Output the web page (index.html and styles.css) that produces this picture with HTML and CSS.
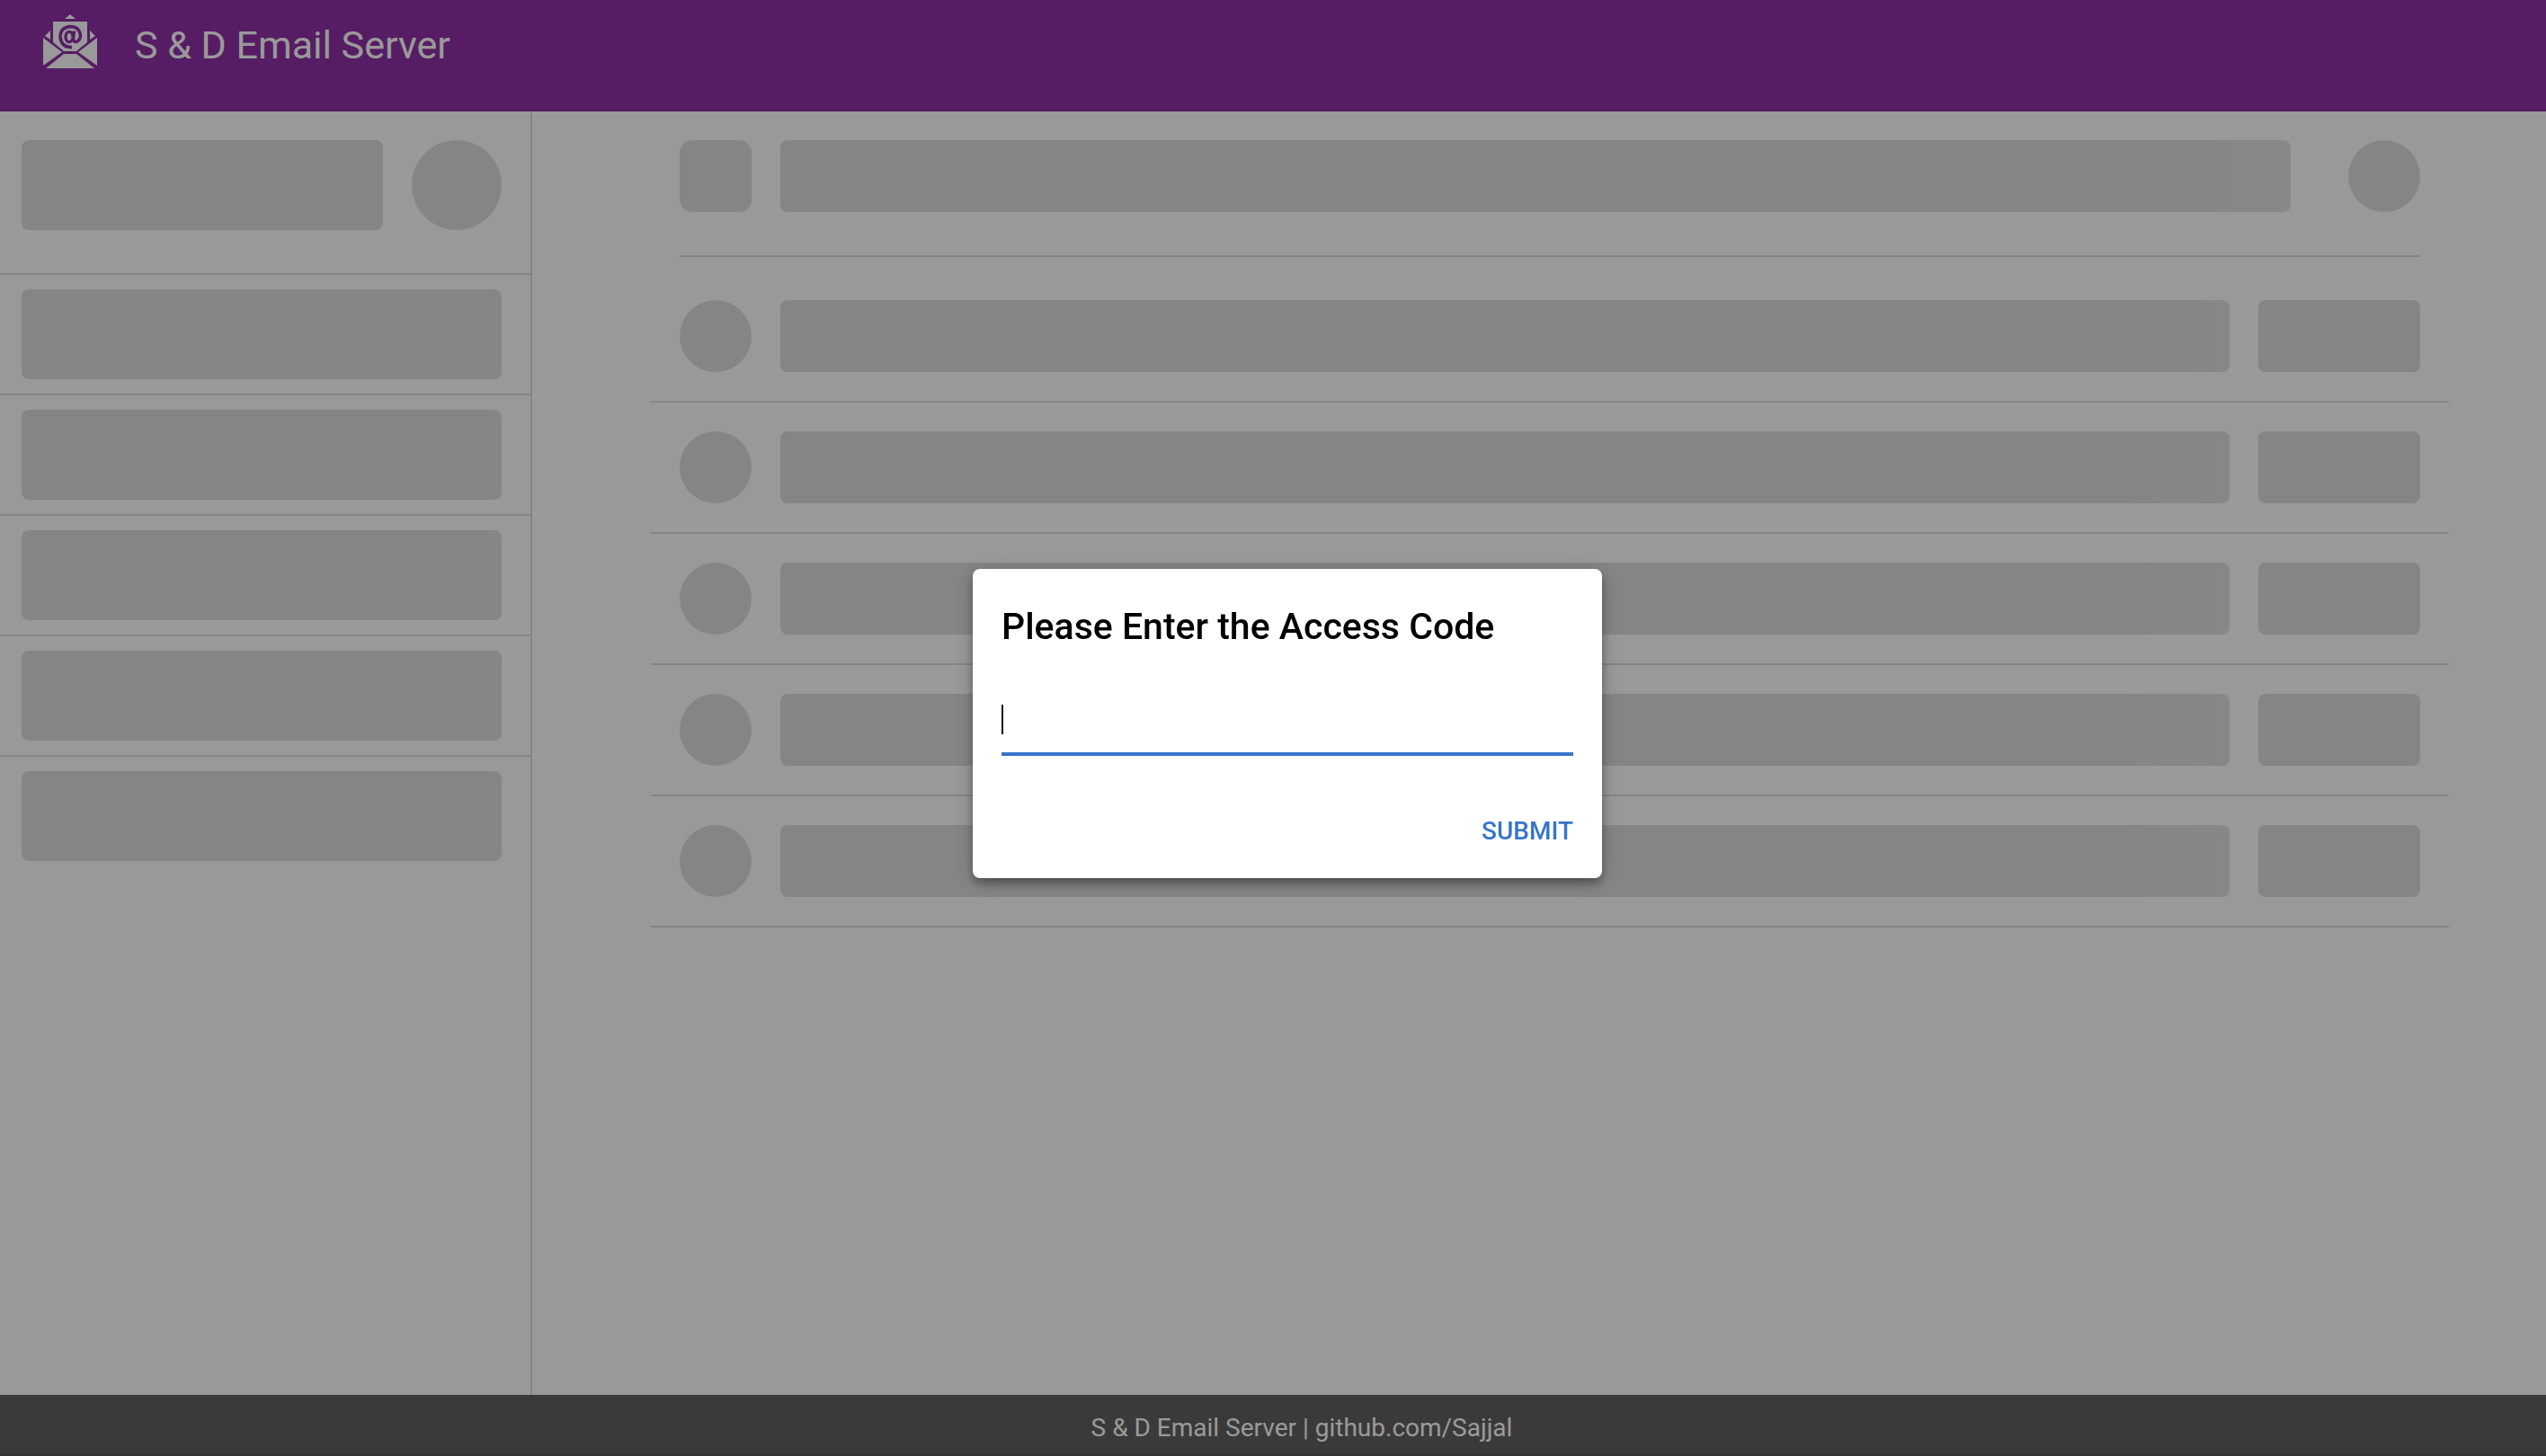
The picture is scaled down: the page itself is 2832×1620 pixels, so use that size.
FILE: index.html
```html
<!DOCTYPE html>
<html lang="en">
<head>
<meta charset="utf-8">
<meta name="viewport" content="width=device-width, initial-scale=1">
<title>S &amp; D Email Server</title>
<link rel="stylesheet" href="styles.css">
</head>
<body>
<div class="app">
  <header class="topbar">
    <svg class="logo" viewBox="0 0 60 60" aria-hidden="true">
      <g fill="currentColor">
        <path d="M30 0L36 5H24Z"/>
        <path d="M2 24L8 18V28Z"/>
        <path d="M58 24L52 18V28Z"/>
        <path d="M11 8H49V31L37 41H23L11 31Z"/>
        <path d="M0 26L21 42L0 57Z"/>
        <path d="M60 26L39 42L60 57Z"/>
        <path d="M3 60L23 44H37L57 60Z"/>
      </g>
      <g class="logo-mark" fill="none" stroke-width="3.4">
        <ellipse cx="29" cy="25" rx="4" ry="5.6"/>
        <path d="M34.500 18.500L33.500 27Q33.500 31 37 30.500Q41.500 29 41.500 23Q40 13.500 30 13.500Q19 14.500 19 25Q20 37 32 36.500"/>
      </g>
    </svg>
    <h1 class="brand">S &amp; D Email Server</h1>
  </header>
  <div class="body">
    <aside class="sidebar">
      <div class="side-head"><div class="bone bar"></div><div class="bone circle"></div></div>
      <div class="side-item"><div class="bone bar"></div></div>
      <div class="side-item"><div class="bone bar"></div></div>
      <div class="side-item"><div class="bone bar"></div></div>
      <div class="side-item"><div class="bone bar"></div></div>
      <div class="side-item"><div class="bone bar"></div></div>
    </aside>
    <main class="content">
      <div class="toolbar"><div class="bone square"></div><div class="bone bar"></div><div class="bone circle action"></div></div>
      <div class="mail"><div class="bone circle"></div><div class="bone bar"></div><div class="bone date"></div></div>
      <div class="mail"><div class="bone circle"></div><div class="bone bar"></div><div class="bone date"></div></div>
      <div class="mail"><div class="bone circle"></div><div class="bone bar"></div><div class="bone date"></div></div>
      <div class="mail"><div class="bone circle"></div><div class="bone bar"></div><div class="bone date"></div></div>
      <div class="mail"><div class="bone circle"></div><div class="bone bar"></div><div class="bone date"></div></div>
    </main>
  </div>
  <footer class="footer">S &amp; D Email Server | github.com/Sajjal</footer>
</div>
<div class="overlay">
  <form class="dialog" role="dialog" aria-labelledby="dialog-title">
    <label class="dialog-title" id="dialog-title" for="code">Please Enter the Access Code</label>
    <input class="code" id="code" type="password" autocomplete="off">
    <button class="submit" type="button">SUBMIT</button>
  </form>
</div>
</body>
</html>
```
FILE: styles.css
```css
*, *::before, *::after { box-sizing: border-box; }
body {
  margin: 0;
  font-family: Roboto, "Liberation Sans", sans-serif;
  background: #fff;
}
.app {
  display: flex;
  flex-direction: column;
  min-height: 100vh;
}
.topbar {
  display: flex;
  align-items: flex-start;
  gap: 42px;
  height: 124px;
  padding: 16px 48px;
  background: #9030a7;
  color: #fff;
}
.logo { width: 60px; height: 60px; }
.logo-mark { stroke: #9030a7; }
.brand {
  margin: 0;
  font-size: 43px;
  line-height: 68px;
  font-weight: 400;
}
.body { display: flex; flex: 1; }
.sidebar {
  width: 592px;
  flex: none;
  border-right: 2px solid #dedede;
}
.bone {
  height: 80px;
  border-radius: 8px;
  background: #dedede;
}
.bar { flex: 1; }
.circle { width: 80px; border-radius: 50%; }
.square { width: 80px; border-radius: 14px; }
.date { width: 180px; }
.sidebar .bone { height: 100px; }
.sidebar .circle { width: 100px; }
.side-head {
  display: flex;
  gap: 32px;
  padding: 32px 32px 48px 24px;
}
.side-item {
  display: flex;
  padding: 16px 32px 16px 24px;
  border-top: 2px solid #dedede;
}
.content {
  flex: 1;
  padding: 0 108px 0 132px;
}
.toolbar {
  display: flex;
  gap: 32px;
  margin: 0 32px 16px;
  padding: 32px 0 48px;
  border-bottom: 2px solid #dedede;
}
.toolbar .bar {
  background: linear-gradient(90deg, #dedede 92%, #e3e3e3);
}
.action { margin-left: 32px; }
.mail {
  display: flex;
  gap: 32px;
  padding: 32px;
  border-bottom: 2px solid #dedede;
}
.mail .bar {
  background: linear-gradient(90deg, #dedede 93%, #e1e1e1);
}
.footer {
  height: 68px;
  padding-left: 64px;
  border-bottom: 1px solid #614f61;
  background: #616161;
  color: #fff;
  font-size: 28px;
  line-height: 74px;
  text-align: center;
}
.overlay {
  position: fixed;
  inset: 0;
  display: flex;
  align-items: center;
  justify-content: center;
  padding-left: 32px;
  background: rgba(0, 0, 0, 0.4);
}
.dialog {
  display: flex;
  flex-direction: column;
  width: 700px;
  margin-bottom: 10px;
  padding: 32px;
  border-radius: 8px;
  background: #fff;
  box-shadow: 0 6px 10px rgba(0, 0, 0, 0.3), 0 4px 24px rgba(0, 0, 0, 0.2);
}
.dialog-title {
  font-size: 41px;
  line-height: 64px;
  font-weight: 500;
  color: #000;
}
/* The resting caret is painted as a background so it does not blink. */
.code {
  width: 100%;
  height: 80px;
  margin-top: 32px;
  padding: 0;
  border: 0;
  border-bottom: 4px solid #3874cb;
  outline: 0;
  background: linear-gradient(#111, #111) 0 23px / 2px 33px no-repeat;
  font: 32px Roboto, sans-serif;
}
.submit {
  align-self: flex-end;
  margin-top: 64px;
  padding: 0;
  border: 0;
  background: none;
  color: #3874cb;
  font: 500 28px/40px Roboto, sans-serif;
}
```
